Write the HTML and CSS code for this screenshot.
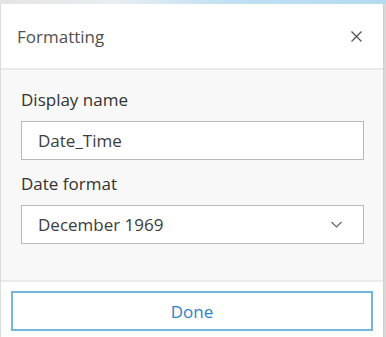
FILE: index.html
```html
<!DOCTYPE html>
<html lang="en">
<head>
    <meta charset="UTF-8">
    <meta name="viewport" content="width=device-width, initial-scale=1.0">
    <title>Formatting</title>
    <link rel="stylesheet" href="styles.css">
</head>
<body>
    <div class="map-strip"></div>
    <div class="panel">
        <header class="panel-header">
            <h2>Formatting</h2>
            <button class="close-btn" type="button" aria-label="Close">
                <svg width="11" height="11" viewBox="0 0 11 11">
                    <path d="M0.5 0.5 L10.5 10.5 M10.5 0.5 L0.5 10.5" stroke="#555" stroke-width="1.3" fill="none"/>
                </svg>
            </button>
        </header>

        <div class="panel-body">
            <label class="field">
                <span class="field-label">Display name</span>
                <input type="text" class="text-input" value="Date_Time">
            </label>

            <div class="field">
                <span class="field-label">Date format</span>
                <div class="select">
                    <span>December 1969</span>
                    <svg width="11" height="7" viewBox="0 0 11 7">
                        <path d="M0.5 1 L5.5 6 L10.5 1" stroke="#666" stroke-width="1.2" fill="none"/>
                    </svg>
                </div>
            </div>
        </div>

        <footer class="panel-footer">
            <button type="button" class="done-btn">Done</button>
        </footer>
    </div>
</body>
</html>
```

FILE: styles.css
```css
/* General Reset */
* {
    margin: 0;
    padding: 0;
    box-sizing: border-box;
}

body {
    font-family: 'Open Sans', sans-serif;
    background: #d8d8d8;
    color: #323232;
    width: 386px;
    height: 337px;
    overflow: hidden;
}

.map-strip {
    height: 4px;
    background: linear-gradient(to right, #e4e4e4 0%, #e8eef2 30%, #bfe0f2 60%, #b3dbf0 100%);
}

.panel {
    width: 384px;
    height: 333px;
    background: #fff;
    border-left: 1px solid #dcdcdc;
    border-right: 1px solid #cfcfcf;
    display: flex;
    flex-direction: column;
}

.panel-header {
    height: 66px;
    display: flex;
    align-items: center;
    justify-content: space-between;
    padding: 0 21px 0 16px;
    border-bottom: 2px solid #eaeaea;
}

.panel-header h2 {
    font-size: 17px;
    font-weight: 400;
    color: #505050;
}

.close-btn {
    background: none;
    border: none;
    display: flex;
    cursor: pointer;
}

.panel-body {
    flex: 1;
    background: #f8f8f8;
    padding: 18px 19px 0 20px;
    border-bottom: 2px solid #eaeaea;
}

.field {
    display: block;
    margin-bottom: 12px;
}

.field-label {
    display: block;
    font-size: 17px;
    line-height: 24px;
    margin-bottom: 9px;
    color: #323232;
}

.text-input,
.select {
    width: 100%;
    height: 39px;
    border: 1px solid #b9b9b9;
    background: #fff;
    font-family: inherit;
    font-size: 17px;
    color: #3c3c3c;
    padding: 0 16px;
}

.text-input:focus {
    outline: none;
}

.select {
    display: flex;
    align-items: center;
    justify-content: space-between;
    padding-right: 21px;
}

.panel-footer {
    height: 55px;
    padding: 9px 10px 0 10px;
}

.done-btn {
    width: 100%;
    height: 40px;
    background: #fff;
    border: 2px solid #75b6df;
    color: #2e84c6;
    font-family: inherit;
    font-size: 17px;
    cursor: pointer;
}
```
